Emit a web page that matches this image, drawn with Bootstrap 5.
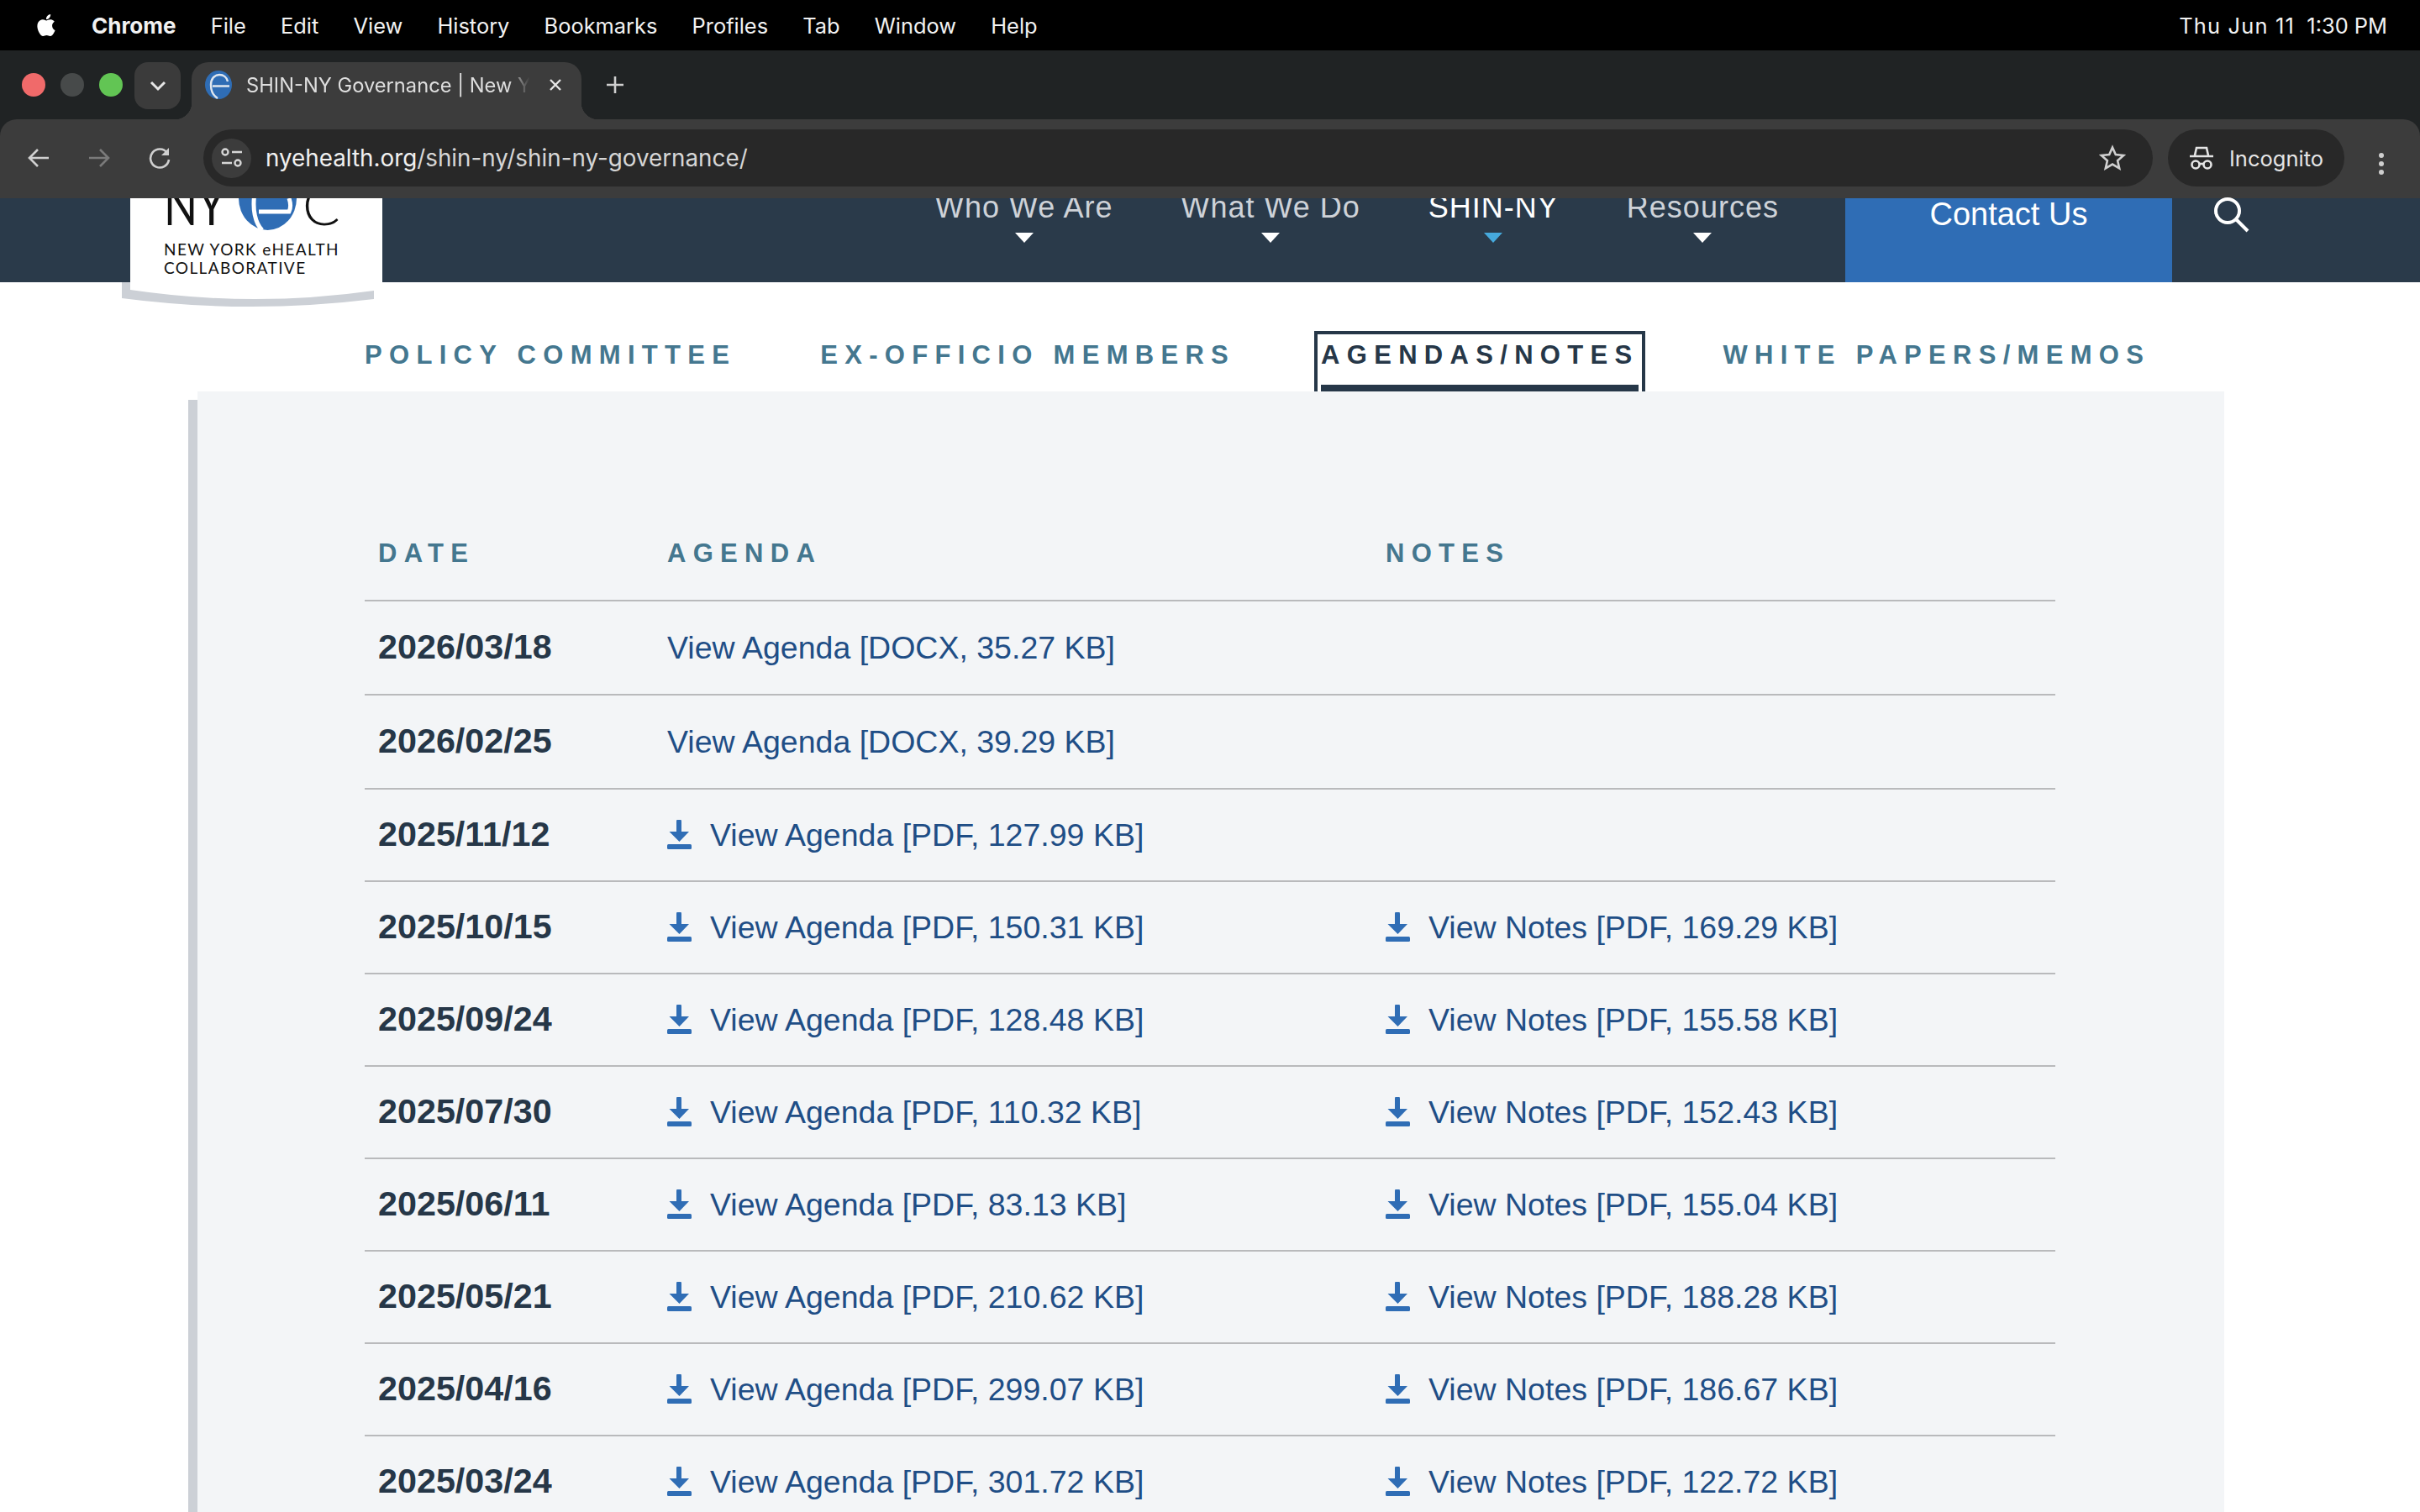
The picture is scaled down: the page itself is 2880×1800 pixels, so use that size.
<!DOCTYPE html>
<html lang="en">
<head>
    <meta charset="UTF-8">
    <title>SHIN-NY Governance | New York eHealth Collaborative</title>
    <link href="https://cdn.jsdelivr.net/npm/bootstrap@5.3.0/dist/css/bootstrap.min.css" rel="stylesheet">
    <style>
        html, body { height: 1800px; overflow: hidden; background: #fff; }
        body { font-family: "Liberation Sans", Arial, sans-serif; }

        /* mac menu bar */
        .mac-bar { height: 60px; background: #000; color: #f2f2f2; padding: 0 39px 0 42px; font: 25.4px Inter, sans-serif; }
        .mac-menu { gap: 41.2px; }
        .mac-apple { width: 26px; height: 32px; margin-right: -0.2px; fill: #fff; }
        .mac-app { font-weight: 700; font-size: 26px; }
        .mac-date { letter-spacing: 1.2px; }

        /* chrome */
        .chrome-top { background: #202324; }
        .tab-strip { height: 82px; padding-left: 26px; }
        .light { width: 28px; height: 28px; border-radius: 50%; margin: 27px 18px 0 0; }
        .tab-list-btn { width: 55px; height: 56px; margin: 14px 13px 0 -4px; background: #3b3b3b; border-radius: 16px; }
        .tab-page { width: 464px; height: 68px; margin-top: 14px; background: #3c3c3c; border-radius: 20px 20px 0 0; padding: 0 22px 14px 16px; color: #dedede; font: 23.7px Inter, sans-serif; position: relative; }
        .tab-page::before, .tab-page::after { content: ""; position: absolute; bottom: 0; width: 20px; height: 20px; }
        .tab-page::before { left: -20px; background: radial-gradient(circle at 0 0, transparent 20px, #3c3c3c 20.5px); }
        .tab-page::after { right: -20px; background: radial-gradient(circle at 100% 0, transparent 20px, #3c3c3c 20.5px); }
        .tab-title { width: 355px; margin-left: 17px; white-space: nowrap; overflow: hidden; -webkit-mask-image: linear-gradient(90deg, #000 88%, transparent 95%); mask-image: linear-gradient(90deg, #000 88%, transparent 95%); }
        .tab-plus { margin: 29px 0 0 28px; }
        .tool-bar { height: 94px; background: #3c3c3c; border-radius: 20px 20px 0 0; padding: 12px 0 0 32px; }
        .tool-btn { width: 32px; height: 68px; margin-right: 40px; flex: none; }
        .omni { width: 2320px; height: 68px; margin-left: -6px; background: #282828; border-radius: 34px; padding: 0 32px 0 10px; color: #d6d6d6; font: 27.8px Inter, sans-serif; flex: none; }
        .omni-tune { width: 47px; height: 47px; border-radius: 50%; background: #3c3c3c; margin-right: 17px; }
        .omni-host { color: #f0f0f0; }
        .incog { width: 210px; height: 68px; margin-left: 18px; background: #282828; border-radius: 34px; padding-left: 25px; color: #e4e4e4; font: 25.5px Inter, sans-serif; gap: 18px; flex: none; }
        .tool-dots { margin-left: 40px; }

        /* site header */
        .site-head { height: 100px; background: #2a3a4a; position: relative; z-index: 1; }
        .site-logo { position: absolute; left: 140px; top: 0; width: 320px; height: 145px; }
        .site-nav { margin-left: 1113px; gap: 81px; height: 100px; overflow: hidden; }
        .site-nav-item { margin-top: -11px; font-size: 36px; line-height: 44px; color: #ced2d8; text-align: center; letter-spacing: 1px; white-space: nowrap; }
        .site-nav-item.on { color: #fff; }
        .drop-arrow { display: block; width: 0; height: 0; margin: 8px auto 0; border-left: 11px solid transparent; border-right: 11px solid transparent; border-top: 12px solid #fff; }
        .on .drop-arrow { border-top-color: #46a9dc; }
        .contact-btn { width: 389px; height: 100px; margin-left: 79px; padding: 0 0 62px; background: #2f6db5; color: #fff; font-size: 38px; border-radius: 0; border: 0; }
        .site-search { width: 44px; height: 44px; margin: -3px 0 0 48px; }

        /* sub tabs */
        .sub-tabs { padding: 58px 0 0 434px; gap: 100px; height: 130px; }
        .sub-tab { height: 72px; padding-top: 14px; font-size: 31px; font-weight: 700; letter-spacing: 8.3px; color: #44778f; white-space: nowrap; text-decoration: none; line-height: 30px; }
        .sub-tab.on { color: #263748; border: 4px solid #263748; border-bottom: 0; padding: 10px 4px 0; margin: 0 -8px 0 -6px; position: relative; }
        .sub-tab.on::after { content: ""; position: absolute; left: 4px; right: 4px; bottom: 0; height: 8px; background: #263748; }

        /* panel */
        .panel-wrap { margin-left: 224px; width: 2423px; padding-top: 10px; }
        .panel-edge { width: 11px; background: #ccd0d6; flex: none; }
        .panel-body { flex: 1; height: 1400px; margin-top: -10px; background: #f3f5f7; padding: 138px 0 0 199px; }
        .gov-table { width: 2012px; table-layout: fixed; margin: 0; --bs-table-bg: transparent; }
        .gov-table th, .gov-table td { padding: 0 0 0 16px; border-bottom: 2px solid #b9babc; box-shadow: none; }
        .gov-table th { height: 111px; vertical-align: top; padding-top: 40px; font-size: 31px; font-weight: 700; line-height: 30px; letter-spacing: 8.3px; color: #44778f; }
        .gov-table td { height: 110px; vertical-align: middle; font-size: 37.5px; color: #1f4e86; }
        .gov-table tr.tall td { height: 112px; }
        .gov-table td.gov-date { font-weight: 700; font-size: 41.3px; color: #263748; }
        .gov-link { color: #1f4e86; text-decoration: none; white-space: nowrap; }
        .dl-icon { width: 29px; height: 35px; margin-right: 22px; vertical-align: -4px; fill: #2f6db5; }
    </style>
</head>
<body>
    <div class="mac-bar d-flex align-items-center justify-content-between">
        <div class="mac-menu d-flex align-items-center">
            <svg class="mac-apple" viewBox="0 0 24 24"><path d="M12.152 6.896c-.948 0-2.415-1.078-3.96-1.04-2.04.027-3.91 1.183-4.961 3.014-2.117 3.675-.546 9.103 1.519 12.09 1.013 1.454 2.208 3.09 3.792 3.039 1.52-.065 2.09-.987 3.935-.987 1.831 0 2.35.987 3.96.948 1.637-.026 2.676-1.48 3.676-2.948 1.156-1.688 1.636-3.325 1.662-3.415-.039-.013-3.182-1.221-3.22-4.857-.026-3.04 2.48-4.494 2.597-4.559-1.429-2.09-3.623-2.324-4.39-2.376-2-.156-3.675 1.09-4.61 1.09zM15.53 3.83c.843-1.012 1.4-2.427 1.245-3.83-1.207.052-2.662.805-3.532 1.818-.78.896-1.454 2.338-1.273 3.714 1.338.104 2.715-.688 3.559-1.701"/></svg>
            <span class="mac-app">Chrome</span><span>File</span><span>Edit</span><span>View</span><span>History</span><span>Bookmarks</span><span>Profiles</span><span>Tab</span><span>Window</span><span>Help</span>
        </div>
        <div><span class="mac-date">Thu Jun 11</span><span>&nbsp;&nbsp;1:30 PM</span></div>
    </div>

    <div class="chrome-top">
        <div class="tab-strip d-flex">
            <div class="light" style="background:#f06a6a"></div>
            <div class="light" style="background:#474a4a"></div>
            <div class="light" style="background:#62c554"></div>
            <div class="tab-list-btn d-flex align-items-center justify-content-center">
                <svg width="20" height="14" viewBox="0 0 20 14"><path d="M2 3l8 8 8-8" fill="none" stroke="#e6e6e6" stroke-width="3"/></svg>
            </div>
            <div class="tab-page d-flex align-items-center">
                <svg width="32" height="34" viewBox="0 0 32 34"><ellipse cx="16" cy="17" rx="16" ry="17" fill="#2f6db5"/><path d="M9 18.500h20M27 13c-1-5-5-8-10-8-6 0-10 5-10 12s3 13 8 16" fill="none" stroke="#dfe6ee" stroke-width="2.400"/></svg>
                <div class="tab-title">SHIN-NY Governance | New York eHealth</div>
                <svg width="18" height="18" viewBox="0 0 18 18" class="ms-1"><path d="M3 3l12 12M15 3L3 15" stroke="#e6e6e6" stroke-width="2.400"/></svg>
            </div>
            <svg class="tab-plus" width="24" height="24" viewBox="0 0 24 24"><path d="M12 2v20M2 12h20" stroke="#cfcfcf" stroke-width="2.600"/></svg>
        </div>

        <div class="tool-bar d-flex">
            <div class="tool-btn d-flex align-items-center">
                <svg width="28" height="28" viewBox="0 0 28 28"><path d="M26 14H4M13 4L3 14l10 10" fill="none" stroke="#cfcfcf" stroke-width="2.600"/></svg>
            </div>
            <div class="tool-btn d-flex align-items-center">
                <svg width="28" height="28" viewBox="0 0 28 28"><path d="M2 14h22M15 4l10 10-10 10" fill="none" stroke="#7a7a7a" stroke-width="2.600"/></svg>
            </div>
            <div class="tool-btn d-flex align-items-center">
                <svg width="28" height="28" viewBox="0 0 28 28"><path d="M23 8a11 11 0 1 0 2 8" fill="none" stroke="#cfcfcf" stroke-width="2.600"/><path d="M25 2v9h-9z" fill="#cfcfcf"/></svg>
            </div>
            <div class="omni d-flex align-items-center">
                <div class="omni-tune d-flex align-items-center justify-content-center flex-shrink-0">
                    <svg width="28" height="26" viewBox="0 0 28 26"><circle cx="6" cy="6" r="3.500" fill="none" stroke="#d6d6d6" stroke-width="2.400"/><path d="M14 6h12M2 19h12" stroke="#d6d6d6" stroke-width="2.400"/><circle cx="21" cy="19" r="3.500" fill="none" stroke="#d6d6d6" stroke-width="2.400"/></svg>
                </div>
                <span><span class="omni-host">nyehealth.org</span>/shin-ny/shin-ny-governance/</span>
                <svg class="ms-auto" width="32" height="32" viewBox="0 0 32 32"><path d="M16 3.500l3.800 8.600 9.400.9-7.100 6.200 2.100 9.200L16 23.600l-8.200 4.800 2.100-9.200L2.800 13l9.400-.9z" fill="none" stroke="#d0d0d0" stroke-width="2.600"/></svg>
            </div>
            <div class="incog d-flex align-items-center">
                <svg width="30" height="30" viewBox="0 0 30 30"><path d="M7 12l2-9h12l2 9M1 13h28" fill="none" stroke="#e4e4e4" stroke-width="2.600"/><circle cx="8" cy="23" r="4.500" fill="none" stroke="#e4e4e4" stroke-width="2.600"/><circle cx="22" cy="23" r="4.500" fill="none" stroke="#e4e4e4" stroke-width="2.600"/><path d="M12.500 22h5" stroke="#e4e4e4" stroke-width="2.600"/></svg>
                <span>Incognito</span>
            </div>
            <div class="tool-dots d-flex align-items-center">
                <svg width="8" height="28" viewBox="0 0 8 28"><circle cx="4" cy="4" r="3" fill="#cfcfcf"/><circle cx="4" cy="14" r="3" fill="#cfcfcf"/><circle cx="4" cy="24" r="3" fill="#cfcfcf"/></svg>
            </div>
        </div>
    </div>

    <header class="site-head d-flex">
        <svg class="site-logo" viewBox="0 0 320 145">
            <path d="M5 100H305V120Q155 138.500 5 119z" fill="#ccd0d6"/>
            <path d="M15 0H315V100H305V110Q160 130.500 15 109z" fill="#fff"/>
            <text x="55" y="32" font-family="Lato, sans-serif" font-weight="400" font-size="66" textLength="73" lengthAdjust="spacingAndGlyphs" fill="#111">NY</text>
            <ellipse cx="178.500" cy="0" rx="34.500" ry="38" fill="#2f6db5"/>
            <path d="M204 0C206 6 206 12 204 16H168M163-6C160 14 164 30 172 38" fill="none" stroke="#fff" stroke-width="5"/>
            <text x="220" y="32" font-family="Lato, sans-serif" font-weight="300" font-size="66" fill="#111">C</text>
            <text x="55" y="68" font-family="Lato, sans-serif" font-size="19" letter-spacing="1.400" fill="#111">NEW YORK eHEALTH</text>
            <text x="55" y="90" font-family="Lato, sans-serif" font-size="19" letter-spacing="1.400" fill="#111">COLLABORATIVE</text>
        </svg>
        <nav class="site-nav d-flex">
            <div class="site-nav-item">Who We Are<span class="drop-arrow"></span></div>
            <div class="site-nav-item">What We Do<span class="drop-arrow"></span></div>
            <div class="site-nav-item on">SHIN-NY<span class="drop-arrow"></span></div>
            <div class="site-nav-item">Resources<span class="drop-arrow"></span></div>
        </nav>
        <a class="btn contact-btn d-flex align-items-center justify-content-center" href="#">Contact Us</a>
        <svg class="site-search" viewBox="0 0 44 44"><circle cx="18" cy="18" r="14" fill="none" stroke="#fff" stroke-width="4"/><path d="M28 28l14 14" stroke="#fff" stroke-width="4"/></svg>
    </header>

    <nav class="sub-tabs nav flex-nowrap align-items-start">
        <a class="sub-tab" href="#">POLICY COMMITTEE</a>
        <a class="sub-tab" href="#">EX-OFFICIO MEMBERS</a>
        <a class="sub-tab on" href="#">AGENDAS/NOTES</a>
        <a class="sub-tab" href="#">WHITE PAPERS/MEMOS</a>
    </nav>

    <div class="panel-wrap d-flex">
        <div class="panel-edge"></div>
        <div class="panel-body">
            <table class="table gov-table">
                <colgroup><col style="width:344px"><col style="width:855px"><col></colgroup>
                <thead>
                    <tr><th>DATE</th><th>AGENDA</th><th>NOTES</th></tr>
                </thead>
                <tbody id="govRows"></tbody>
            </table>
        </div>
    </div>

    <script src="https://cdn.jsdelivr.net/npm/bootstrap@5.3.0/dist/js/bootstrap.bundle.min.js"></script>
    <script>
        const rows = [
            ['2026/03/18', 'DOCX, 35.27 KB', ''],
            ['2026/02/25', 'DOCX, 39.29 KB', ''],
            ['2025/11/12', 'PDF, 127.99 KB', ''],
            ['2025/10/15', 'PDF, 150.31 KB', 'PDF, 169.29 KB'],
            ['2025/09/24', 'PDF, 128.48 KB', 'PDF, 155.58 KB'],
            ['2025/07/30', 'PDF, 110.32 KB', 'PDF, 152.43 KB'],
            ['2025/06/11', 'PDF, 83.13 KB', 'PDF, 155.04 KB'],
            ['2025/05/21', 'PDF, 210.62 KB', 'PDF, 188.28 KB'],
            ['2025/04/16', 'PDF, 299.07 KB', 'PDF, 186.67 KB'],
            ['2025/03/24', 'PDF, 301.72 KB', 'PDF, 122.72 KB']
        ];
        const dlIcon = '<svg class="dl-icon" viewBox="0 0 29 35"><path d="M11 2a3 3 0 0 1 6 0v12h9L14.500 26 2.500 14H11z"/><rect x="0" y="29" width="29" height="6" rx="1.500"/></svg>';

        function linkCell(label, info) {
            if (!info) return '<td></td>';
            const icon = info.startsWith('PDF') ? dlIcon : '';
            return `<td><a class="gov-link" href="#">${icon}View ${label} [${info}]</a></td>`;
        }

        document.getElementById('govRows').innerHTML = rows.map(function(r) {
            const tall = r[1].startsWith('DOCX') ? ' class="tall"' : '';
            return `<tr${tall}><td class="gov-date">${r[0]}</td>${linkCell('Agenda', r[1])}${linkCell('Notes', r[2])}</tr>`;
        }).join('');
    </script>
</body>
</html>
